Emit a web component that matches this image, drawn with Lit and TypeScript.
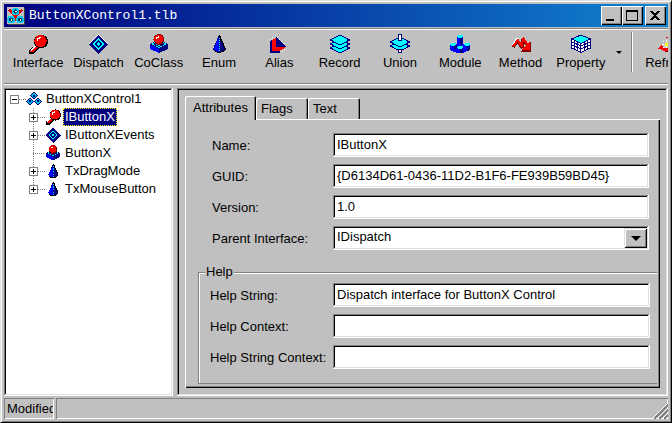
import { LitElement, html, svg, css, nothing } from "lit";
import { customElement, property, state } from "lit/decorators.js";
import { classMap } from "lit/directives/class-map.js";

type Glyph = ReturnType<typeof svg>;

const sheet = (y: number) => svg`
  <path d="M10 ${y} L19.500 ${y + 5} L10 ${y + 10} L0.500 ${y + 5} Z" fill="#0ff" stroke="#000080"/>`;

const GLYPHS: Record<string, Glyph> = {
  interface: svg`
    <path d="M9 10 L12 13 L6 20 L1 20 L1 16 Z" fill="#000"/>
    <path d="M8 10 L11 13 L5 18 L2 18 L2 16 Z" fill="#f00"/>
    <path d="M2 16 L8 10 L9 11 L3 17 Z" fill="#fff"/>
    <circle cx="13" cy="7.500" r="7" fill="#000"/>
    <circle cx="12.500" cy="7" r="6.200" fill="#f00"/>
    <path d="M9 4 h2 v-1 h2 v1 h-1 v1 h-2 v2 h-1 z" fill="#fff"/>`,
  dispatch: svg`
    <path d="M0 10 L10 0 L20 10 L10 20 Z" fill="#fff"/>
    <path d="M1 10 L10 1 L20 10 L10 20 Z" fill="#000080"/>
    <path d="M4 10 L10 4 L16 10 L10 16 Z" fill="#0ff"/>
    <path d="M6 10 L10 6 L14 10 L10 14 Z" fill="#000080"/>
    <path d="M8 10 L10 8 L12 10 L10 12 Z" fill="#0ff"/>`,
  coclass: svg`
    <path d="M1 10 L10 6 L19 10 L19 15 L10 19 L1 15 Z" fill="#000080"/>
    <path d="M1 11 L10 15 L10 19 L1 15 Z" fill="#00f"/>
    <path d="M2 10 L10 6 L18 10 L10 14 Z" fill="#0ff"/>
    <path d="M5 9 L10 12 L15 9 L15 11 L10 13 L5 11 Z" fill="#000080"/>
    <circle cx="10" cy="5.500" r="5.500" fill="#800000"/>
    <circle cx="9.500" cy="5" r="4.500" fill="#f00"/>
    <path d="M7 3 h2 v-1 h1 v2 h-2 v1 h-1 z" fill="#fff"/>`,
  enum: svg`
    <path d="M10 1 L11 1 L17 15 L14 18 L10 19 L6 18 L4 15 Z" fill="#000"/>
    <path d="M10 2 L10 18 L6 17 L4 15 Z" fill="#00f"/>
    <path d="M10 3 L16 15 L14 17 L10 18 Z" fill="#000080"/>
    <path d="M10 4 V18" fill="none" stroke="#0ff" stroke-dasharray="1 1"/>`,
  alias: svg`
    <path d="M1 7 L3 6 L3 17 L11 17 L11 19 L1 19 Z" fill="#000080"/>
    <path d="M3 6 L7 4 L7 13 L16 13 L14 15 L10 17 L3 17 Z" fill="#f00"/>
    <path d="M7 2 L17 13 L7 13 Z" fill="#000080"/>
    <path d="M6 1 L18 13" fill="none" stroke="#fff" stroke-dasharray="1 2"/>
    <path d="M1 6 L6 2 M13 18 L18 14" fill="none" stroke="#fff" stroke-dasharray="1 2"/>`,
  record: svg`${sheet(9)}${sheet(5)}${sheet(1)}`,
  union: svg`${sheet(7)}${sheet(3)}
    <rect x="8.500" y=".5" width="3" height="6" fill="#fff" stroke="#000080"/>
    <rect x="8.500" y="15.500" width="3" height="3" fill="#fff" stroke="#000080"/>`,
  module: svg`
    <path d="M7 2 H13 V10 H20 V16 L13 19 H7 L0 16 V10 H7 Z" fill="#00f"/>
    <path d="M10 4 H13 V10 L10 11 Z M4 11 H7 V13 L4 17 Z M10 15 H13 V19 H10 Z M17 12 H20 V16 L17 17 Z" fill="#000080"/>
    <path d="M7 2 L8 1 H12 L13 2 L12 4 H8 Z M0 10 L1 9 H5 L6 10 L5 12 H1 Z M14 10 L15 9 H19 L20 10 L19 12 H15 Z M7 13 L8 12 H12 L13 13 L12 15 H8 Z" fill="#0ff"/>`,
  method: svg`
    <path d="M1 12 L6 4 L8 5" fill="none" stroke="#fff"/>
    <path d="M2 13 L7 7 L11 14 L12 5 L17 12" fill="none" stroke="#800000" stroke-width="3" stroke-linejoin="bevel"/>
    <path d="M2 12 L7 6 L11 13 L12 4 L17 11" fill="none" stroke="#f00" stroke-width="2" stroke-linejoin="bevel"/>
    <path d="M20 7 V18 H10 Z" fill="#800000"/>
    <path d="M19 7 V16 H11 Z" fill="#f00"/>`,
  property: svg`
    <path d="M10 1 L19.500 5 V14 L10 18.500 L0.500 14 V5 Z" fill="#fff" stroke="#000080"/>
    <path d="M3.500 7 V15 M6.500 8 V16 M9.500 9 V18 M13.500 8 V16 M16.500 7 V15 M1 8 L10 12 L19 8 M1 11 L10 15 L19 11" fill="none" stroke="#000080"/>
    <path d="M10 1 L19.500 5 L10 9.500 L0.500 5 Z" fill="#0ff" stroke="#000080"/>`,
  refresh: svg`
    <path d="M3 14 Q8 19 16 16" fill="none" stroke="#800000" stroke-width="2"/>
    <path d="M3 14 Q8 17 16 15" fill="none" stroke="#f00" stroke-width="3"/>
    <path d="M0 15 L3 11 L7 14 L5 16 Z" fill="#f00"/>
    <path d="M8 3 H18" stroke="#f00"/>
    <path d="M8.500 6 V14 M4 10.500 H13 M5 7 L12 14 M12 7 L5 14" stroke="#fff" stroke-dasharray="2 1"/>
    <rect x="7" y="9" width="3" height="3" fill="#ff0"/>`,
  library: svg`
    <path d="M10 1 L15 6 L10 11 L5 6 Z M5 8 L10 13 L5 18 L0 13 Z M15 8 L20 13 L15 18 L10 13 Z" fill="#000080"/>
    <path d="M10 2 L14 6 L10 10 L6 6 Z M5 9 L9 13 L5 17 L1 13 Z M15 9 L19 13 L15 17 L11 13 Z" fill="#0bd"/>
    <path d="M10 4 L12 6 L10 8 L8 6 Z M5 11 L7 13 L5 15 L3 13 Z M15 11 L17 13 L15 15 L13 13 Z" fill="#000080"/>`,
  app: svg`
    <rect x="1" y="1" width="19" height="19" fill="#404040"/>
    <rect x="0" y="0" width="19" height="19" fill="#c0c0c0"/>
    <path d="M2 3 L16 16 M17 3 L3 16 M5 14 H15" stroke="#e00000" stroke-width="3"/>
    <circle cx="9.500" cy="5" r="3.300" fill="#004060" stroke="#00c8f0" stroke-width="2"/>
    <circle cx="4.500" cy="14" r="3.300" fill="#004060" stroke="#00c8f0" stroke-width="2"/>
    <circle cx="14.500" cy="14" r="3.300" fill="#004060" stroke="#00c8f0" stroke-width="2"/>
    <path d="M9 4 h2 v2 h-2 z M4 13 h2 v2 h-2 z M14 13 h2 v2 h-2 z" fill="#fff"/>`,
};

@customElement("tlb-icon")
class TlbIcon extends LitElement {
  @property() name = "";
  static styles = css`
    :host { display: block; flex: none; width: 20px; height: 20px; }
    svg { display: block; width: 100%; height: 100%; shape-rendering: crispEdges; }
  `;
  render() {
    return html`<svg viewBox="0 0 20 20" aria-hidden="true">${GLYPHS[this.name] ?? nothing}</svg>`;
  }
}

const TOOLS = ["Interface", "Dispatch", "CoClass", "Enum", "Alias", "Record", "Union", "Module", "Method", "Property"];

const NODES = [
  { icon: "interface", label: "IButtonX", expandable: true },
  { icon: "dispatch", label: "IButtonXEvents", expandable: true },
  { icon: "coclass", label: "ButtonX", expandable: false },
  { icon: "enum", label: "TxDragMode", expandable: true },
  { icon: "enum", label: "TxMouseButton", expandable: true },
];

const TABS = ["Attributes", "Flags", "Text"];

const ATTRIBUTES = [
  { id: "name", label: "Name:", value: "IButtonX" },
  { id: "guid", label: "GUID:", value: "{D6134D61-0436-11D2-B1F6-FE939B59BD45}" },
  { id: "version", label: "Version:", value: "1.0" },
];

const HELP = [
  { id: "help-string", label: "Help String:", value: "Dispatch interface for ButtonX Control" },
  { id: "help-context", label: "Help Context:", value: "" },
  { id: "help-string-context", label: "Help String Context:", value: "" },
];

@customElement("app-root")
class AppRoot extends LitElement {
  @state() private selected = "IButtonX";
  @state() private tab = "Attributes";

  static styles = css`
    :host {
      display: block;
      font: 13px/16px "Liberation Sans", Arial, sans-serif;
      color: #000;
    }
    * { box-sizing: border-box; }
    button, input, select {
      font: inherit;
      color: inherit;
      margin: 0;
      padding: 0;
      border: 0;
      border-radius: 0;
      background: none;
      outline: none;
      appearance: none;
    }
    ul { list-style: none; margin: 0; padding: 0; }

    .window {
      display: flex;
      flex-direction: column;
      min-height: 100vh;
      padding: 3px;
      background: #c0c0c0;
      border: 1px solid;
      border-color: #dfdfdf #000 #000 #dfdfdf;
      box-shadow: inset 1px 1px #fff, inset -1px -1px #808080;
    }

    .titlebar {
      display: flex;
      align-items: center;
      height: 23px;
      padding: 0 2px 0 3px;
      background: linear-gradient(to right, #000080, #1084d0);
      color: #fff;
    }
    .titlebar tlb-icon { width: 18px; height: 18px; }
    .title {
      flex: 1;
      margin: 0 0 0 4px;
      font: 13px/16px "Liberation Mono", monospace;
      white-space: nowrap;
    }
    .caption {
      width: 21px;
      height: 19px;
      background: #c0c0c0;
      box-shadow: inset 1px 1px #fff, inset -1px -1px #000, inset -2px -2px #808080;
    }
    .caption.close { margin-left: 2px; }
    .caption svg { display: block; width: 21px; height: 19px; }

    .toolbar {
      display: flex;
      height: 57px;
      margin-top: 1px;
      padding: 4px 0 4px 4px;
      overflow: hidden;
      box-shadow: inset 0 1px #808080, inset 0 2px #fff, inset 0 -1px #fff, inset 0 -2px #808080;
    }
    .tools {
      flex: none;
      display: grid;
      grid-template-columns: repeat(10, 1fr);
      width: 603px;
    }
    .tool {
      display: flex;
      flex-direction: column;
      align-items: center;
      gap: 1px;
      padding-top: 2px;
    }
    .tool.refresh { flex: none; width: 60px; margin-left: 5px; }
    .more { flex: none; display: flex; justify-content: center; width: 16px; height: 40px; }
    .more::before {
      content: "";
      align-self: center;
      border: 3px solid transparent;
      border-top-color: #000;
      border-bottom: 0;
    }
    .separator {
      flex: none;
      width: 2px;
      height: 40px;
      margin-left: 4px;
      border-left: 1px solid #808080;
      border-right: 1px solid #fff;
    }

    .body {
      flex: 1;
      display: grid;
      grid-template-columns: 169px minmax(0, 1fr);
      gap: 4px;
      padding-top: 3px;
    }
    .sunken {
      box-shadow: inset -1px -1px #fff, inset 1px 1px #808080, inset -2px -2px #dfdfdf, inset 2px 2px #000;
    }

    .tree { padding: 2px; background: #fff; }
    .node { display: flex; align-items: center; height: 18px; padding-left: 23px; }
    .root > .node { padding-left: 4px; }
    .leaf {
      background: repeating-linear-gradient(#808080 0 1px, transparent 1px 2px) 27px 0 / 1px 18px no-repeat;
    }
    .leaf:last-child { background-size: 1px 9px; }
    .expander { width: 9px; height: 9px; background: #fff; border: 1px solid #808080; }
    .expander svg { display: block; width: 7px; height: 7px; }
    .stem {
      width: 7px;
      height: 1px;
      background: repeating-linear-gradient(to right, #808080 0 1px, transparent 1px 2px);
    }
    .stem.long { width: 12px; margin-left: 4px; }
    .node tlb-icon { width: 16px; height: 16px; margin-right: 2px; }
    .label { height: 18px; padding: 0 2px; line-height: 18px; white-space: nowrap; }
    .label.selected { background: #000080; color: #fff; outline: 1px dotted #ff0; outline-offset: -1px; }

    .editor { display: flex; flex-direction: column; padding: 8px; }
    .tabs { display: flex; align-items: flex-end; height: 23px; }
    .tab {
      height: 21px;
      padding: 0 0 0 5px;
      text-align: left;
      border-radius: 2px 2px 0 0;
      background: #c0c0c0;
      box-shadow: inset 1px 1px #fff, inset -1px 0 #000, inset -2px 0 #808080;
      width: 52px;
    }
    .tab.wide { width: 71px; padding-left: 8px; }
    .tab.active {
      position: relative;
      height: 24px;
      margin-bottom: -1px;
    }
    .page {
      flex: 1;
      padding: 14px 3px 4px 13px;
      box-shadow: inset 1px 1px #fff, inset -1px -1px #000, inset -2px -2px #808080;
    }
    .fields {
      display: grid;
      grid-template-columns: 121px minmax(0, 1fr);
      grid-auto-rows: 24px;
      align-items: center;
      gap: 7px 0;
      padding: 0 8px 0 14px;
    }
    .fields label { padding-top: 2px; white-space: nowrap; }
    .box { display: block; width: 100%; height: 24px; padding: 0 4px 2px; background: #fff; }
    .combo { display: grid; align-items: center; }
    .combo > * { grid-area: 1 / 1; }
    .drop {
      justify-self: end;
      display: flex;
      align-items: center;
      justify-content: center;
      width: 23px;
      height: 20px;
      margin-right: 2px;
      background: #c0c0c0;
      box-shadow: inset 1px 1px #dfdfdf, inset -1px -1px #000, inset 2px 2px #fff, inset -2px -2px #808080;
      pointer-events: none;
    }
    .drop::before { content: ""; border: 5px solid transparent; border-top-color: #000; border-bottom: 0; }
    .group {
      min-width: 0;
      margin: 14px 0 0;
      padding: 3px 0 14px;
      border: 1px solid #808080;
      border-right: 0;
      box-shadow: inset 1px 1px #fff;
    }
    .group legend { margin-left: 6px; padding: 0 1px; background: #c0c0c0; }
    .group .fields { grid-template-columns: 123px minmax(0, 1fr); padding-left: 11px; padding-right: 7px; }

    .status {
      display: grid;
      grid-template-columns: 50px minmax(0, 1fr);
      gap: 2px;
      height: 21px;
      margin-top: 2px;
    }
    .cell {
      display: flex;
      align-items: center;
      justify-content: flex-start;
      overflow: hidden;
      box-shadow: inset 1px 1px #808080, inset -1px -1px #fff;
    }
    .cell span { flex: 1; margin: 0 1px 0 3px; overflow: hidden; white-space: nowrap; }
    .grip { flex: none; align-self: flex-end; width: 16px; height: 16px; margin-left: auto; }
  `;

  private expander(name: string, open: boolean) {
    return html`<button class="expander" aria-label=${(open ? "Collapse " : "Expand ") + name}>
      <svg viewBox="0 0 7 7" shape-rendering="crispEdges"><path d=${open ? "M1 3h5v1H1z" : "M1 3h5v1H1z M3 1h1v5H3z"}/></svg>
    </button>`;
  }

  private label(name: string) {
    return html`<button class=${classMap({ label: true, selected: this.selected === name })}
      @click=${() => (this.selected = name)}>${name}</button>`;
  }

  private field(f: { id: string; label: string; value: string }) {
    return html`<label for=${f.id}>${f.label}</label>
      <input class="box sunken" id=${f.id} type="text" spellcheck="false" .value=${f.value}>`;
  }

  render() {
    return html`
      <div class="window">
        <header class="titlebar">
          <tlb-icon name="app"></tlb-icon>
          <h1 class="title">ButtonXControl1.tlb</h1>
          <button class="caption" aria-label="Minimize">
            <svg viewBox="0 0 21 19" shape-rendering="crispEdges"><path d="M5 13h8v2H5z"/></svg>
          </button>
          <button class="caption" aria-label="Maximize">
            <svg viewBox="0 0 21 19" shape-rendering="crispEdges"><path fill-rule="evenodd" d="M4 4h12v11H4z M5 6v8h10V6z"/></svg>
          </button>
          <button class="caption close" aria-label="Close">
            <svg viewBox="0 0 21 19" shape-rendering="crispEdges"><path d="M6 5l8 9 M14 5l-8 9" stroke="#000" stroke-width="2"/></svg>
          </button>
        </header>

        <nav class="toolbar" aria-label="Type library">
          <div class="tools">
            ${TOOLS.map((t) => html`<button class="tool"><tlb-icon name=${t.toLowerCase()}></tlb-icon>${t}</button>`)}
          </div>
          <button class="more" aria-label="Property options"></button>
          <div class="separator"></div>
          <button class="tool refresh"><tlb-icon name="refresh"></tlb-icon>Refresh</button>
        </nav>

        <main class="body">
          <ul class="tree sunken">
            <li class="root">
              <div class="node">
                ${this.expander("ButtonXControl1", true)}<span class="stem"></span>
                <tlb-icon name="library"></tlb-icon>${this.label("ButtonXControl1")}
              </div>
              <ul>
                ${NODES.map((n) => html`<li class="node leaf">
                  ${n.expandable
                    ? html`${this.expander(n.label, false)}<span class="stem"></span>`
                    : html`<span class="stem long"></span>`}
                  <tlb-icon name=${n.icon}></tlb-icon>${this.label(n.label)}
                </li>`)}
              </ul>
            </li>
          </ul>

          <section class="editor sunken">
            <div class="tabs" role="tablist">
              ${TABS.map((t) => html`<button role="tab" aria-selected=${this.tab === t}
                class=${classMap({ tab: true, wide: t === "Attributes", active: this.tab === t })}
                @click=${() => (this.tab = t)}>${t}</button>`)}
            </div>
            <form class="page" role="tabpanel">
              <div class="fields">
                ${ATTRIBUTES.map((f) => this.field(f))}
                <label for="parent">Parent Interface:</label>
                <div class="combo">
                  <select class="box sunken" id="parent"><option>IDispatch</option></select>
                  <span class="drop"></span>
                </div>
              </div>
              <fieldset class="group">
                <legend>Help</legend>
                <div class="fields">${HELP.map((f) => this.field(f))}</div>
              </fieldset>
            </form>
          </section>
        </main>

        <footer class="status">
          <div class="cell"><span>Modified</span></div>
          <div class="cell">
            <svg class="grip" viewBox="0 0 16 16" shape-rendering="crispEdges" aria-hidden="true">
              <path d="M0 16L16 0 M5 16L16 5 M10 16L16 10" stroke="#fff"/>
              <path d="M2 16L16 2 M7 16L16 7 M12 16L16 12" stroke="#808080" stroke-width="2"/>
            </svg>
          </div>
        </footer>
      </div>
    `;
  }
}
